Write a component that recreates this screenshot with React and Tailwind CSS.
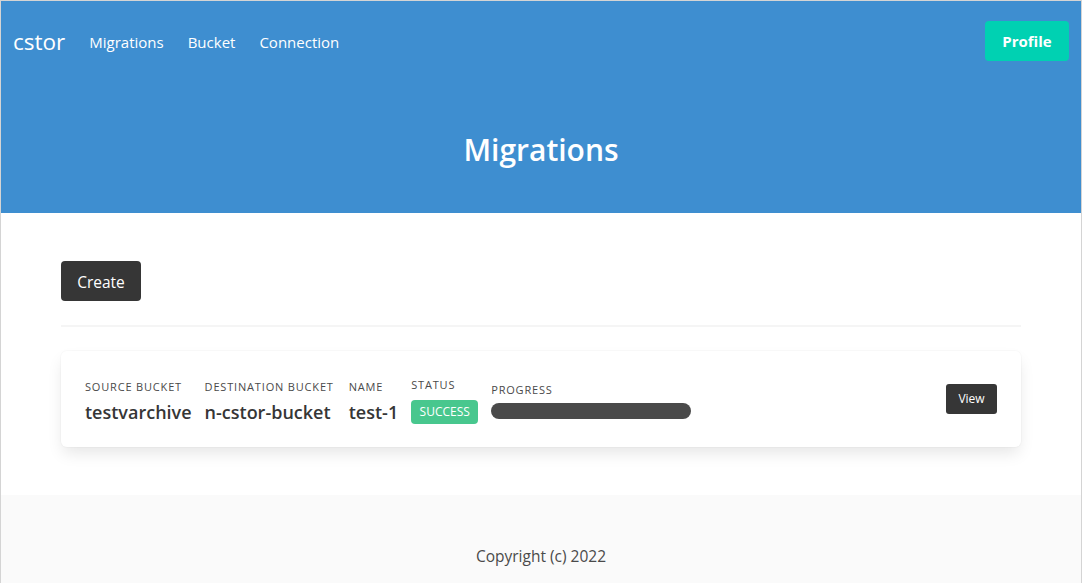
const Field = ({ label, children, className = "" }) => (
  <div className={`flex flex-col ${className}`}>
    <span className="text-[11px] uppercase tracking-[0.075em] leading-[16px] text-[#4a4a4a]">{label}</span>
    {children}
  </div>
);

const Value = ({ children }) => (
  <span className="mt-1 text-[18px] font-semibold leading-[26px] text-[#363636]">{children}</span>
);

export default function App() {
  return (
    <div
      className="min-h-[583px] border-x border-t border-[#d4d4d4] bg-white text-[#4a4a4a]"
      style={{ fontFamily: '"Open Sans", "Noto Sans", sans-serif' }}
    >
      <section className="flex h-[212px] flex-col bg-[#3e8ed0] text-white">
        <nav className="flex h-[82px] items-center justify-between px-3">
          <div className="flex items-center gap-6">
            <span className="text-[22.5px] leading-none">cstor</span>
            <a className="text-[15px]">Migrations</a>
            <a className="text-[15px]">Bucket</a>
            <a className="text-[15px]">Connection</a>
          </div>
          <button className="mb-[2px] h-10 w-[84px] rounded-[4px] bg-[#00d1b2] text-[15px] font-bold text-white">
            Profile
          </button>
        </nav>
        <div className="flex flex-1 items-center justify-center pt-1">
          <h1 className="text-[30px] font-semibold leading-none">Migrations</h1>
        </div>
      </section>

      <main className="px-[60px] pb-12 pt-12">
        <button className="h-10 w-20 rounded-[4px] bg-[#363636] pt-[3px] text-[15.5px] text-white">Create</button>
        <hr className="my-6 h-[2px] border-0 bg-[#f5f5f5]" />
        <div className="flex h-24 items-center justify-between rounded-md bg-white px-6 shadow-[0_0.5em_1em_-0.125em_rgba(10,10,10,0.1),0_0_0_1px_rgba(10,10,10,0.02)]">
          <div className="mt-[3px] flex items-end gap-[13px]">
            <Field label="Source Bucket">
              <Value>testvarchive</Value>
            </Field>
            <Field label="Destination Bucket" className="pr-[2px]">
              <Value>n-cstor-bucket</Value>
            </Field>
            <Field label="Name">
              <Value>test-1</Value>
            </Field>
            <Field label="Status" className="pb-px">
              <span className="mt-[7px] flex h-6 w-[67px] items-center justify-center rounded-[4px] bg-[#48c78e] text-[12px] text-white">
                SUCCESS
              </span>
            </Field>
            <Field label="Progress" className="self-center gap-[5px]">
              <div className="h-4 w-[200px] rounded-full bg-[#4a4a4a]" />
            </Field>
          </div>
          <button className="h-[30px] w-[51px] rounded-[3px] bg-[#363636] text-[12px] text-white">View</button>
        </div>
      </main>

      <footer className="bg-[#fafafa] pb-24 pt-[49px] text-center text-[15.5px] leading-6 text-[#4a4a4a]">
        Copyright (c) 2022
      </footer>
    </div>
  );
}
